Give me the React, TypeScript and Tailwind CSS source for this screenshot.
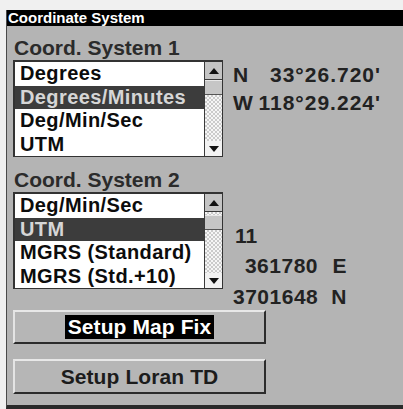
import React from "react";

const FONT = "font-['Liberation_Sans',Arial,sans-serif]";
const CHECKER =
  "bg-[image:repeating-conic-gradient(#cbcbcb_0%_25%,#f6f6f6_0%_50%)] bg-[length:4px_4px]";

function ScrollBar({ second }: { second?: boolean }) {
  return (
    <div className="flex w-[18px] flex-col border-l border-[#3a3a3a]">
      <div className="flex h-[18px] items-center justify-center border-b border-[#3a3a3a] bg-[#c4c4c4]">
        <svg width="10" height="6" viewBox="0 0 10 6">
          <polygon points="0,6 5,0 10,6" fill="#111" />
        </svg>
      </div>
      {second && <div className={`h-[3px] ${CHECKER}`} />}
      <div className="h-[15px] border-b border-t border-b-[#555] border-t-[#e8e8e8] bg-[#c6c6c6]" />
      <div className={`flex-1 ${CHECKER}`} />
      <div className="flex h-[15px] items-center justify-center bg-[#f2f2f2]">
        <svg width="10" height="6" viewBox="0 0 10 6">
          <polygon points="0,0 10,0 5,6" fill="#111" />
        </svg>
      </div>
    </div>
  );
}

function ListBox({
  items,
  selected,
  second,
}: {
  items: string[];
  selected: number;
  second?: boolean;
}) {
  return (
    <div className="flex w-[210px] border-b border-l-2 border-r border-t-2 border-[#333] bg-white">
      <div className="flex flex-1 flex-col">
        {items.map((it, i) => (
          <div
            key={it}
            className={`h-[23.5px] pl-[5px] text-[20px] font-bold leading-[23.5px] tracking-[0.4px] whitespace-nowrap ${
              i === selected ? "bg-[#3c3c3c] text-[#d6d6d6]" : "text-[#0c0c0c]"
            }`}
          >
            {it}
          </div>
        ))}
      </div>
      <ScrollBar second={second} />
    </div>
  );
}

function Button({ children, inverted }: { children: string; inverted?: boolean }) {
  return (
    <div className="flex w-[253px] items-center justify-center border-2 border-b-[#2c2c2c] border-l-[#e4e4e4] border-r-[#2c2c2c] border-t-[#e8e8e8] bg-[#b6b6b6]">
      <span
        className={`px-[3px] text-[21px] font-bold leading-[24px] tracking-[0.1px] ${
          inverted ? "bg-black text-white" : "text-[#1c1c1c]"
        }`}
      >
        {children}
      </span>
    </div>
  );
}

export default function App() {
  return (
    <div className={`${FONT} h-[409px] w-[403px] overflow-hidden bg-[#f0f0f0] pl-[6px] pt-[10px]`}>
      <div className="flex h-[399px] flex-col border-b-4 border-l border-b-[#2a2a2a] border-l-[#4a4a4a] bg-[#b4b4b4]">
        <div className="h-[16px] bg-black pl-[1px] text-[15px] font-bold leading-[16px] text-white">
          Coordinate System
        </div>
        <div className="flex flex-row pl-[6px]">
          <div className="flex w-[210px] flex-col">
            <div className="mt-[10px] h-[24px] pl-[1px] text-[21px] font-bold leading-[24px] text-[#2b2b2b] whitespace-nowrap">
              Coord. System 1
            </div>
            <ListBox
              items={["Degrees", "Degrees/Minutes", "Deg/Min/Sec", "UTM"]}
              selected={1}
            />
            <div className="mt-[11px] h-[24px] pl-[1px] text-[21px] font-bold leading-[24px] text-[#2b2b2b] whitespace-nowrap">
              Coord. System 2
            </div>
            <ListBox
              items={["Deg/Min/Sec", "UTM", "MGRS (Standard)", "MGRS (Std.+10)"]}
              selected={1}
              second
            />
          </div>
          <div className="ml-[10px] flex w-[148px] flex-col text-[21px] font-bold text-[#222]">
            <div className="mt-[35px] flex h-[28px] justify-between leading-[28px]">
              <span>N</span>
              <span className="tracking-[1px]">33°26.720'</span>
            </div>
            <div className="flex h-[28px] justify-between leading-[28px]">
              <span>W</span>
              <span className="tracking-[1px]">118°29.224'</span>
            </div>
            <div className="mt-[107px] h-[24px] pl-[2px] leading-[24px]">11</div>
            <div className="mt-[6px] grid h-[24px] grid-cols-[85px_29px] leading-[24px] tracking-[0.5px]">
              <span className="text-right">361780</span>
              <span className="text-right">E</span>
            </div>
            <div className="mt-[7px] grid h-[24px] grid-cols-[85px_29px] leading-[24px] tracking-[0.5px]">
              <span className="text-right">3701648</span>
              <span className="text-right">N</span>
            </div>
          </div>
        </div>
        <div className="flex flex-col pl-[6px]">
          <div className="mt-[1px] flex h-[34px]">
            <Button inverted>Setup Map Fix</Button>
          </div>
          <div className="mt-[15px] flex h-[35px]">
            <Button>Setup Loran TD</Button>
          </div>
        </div>
      </div>
    </div>
  );
}
